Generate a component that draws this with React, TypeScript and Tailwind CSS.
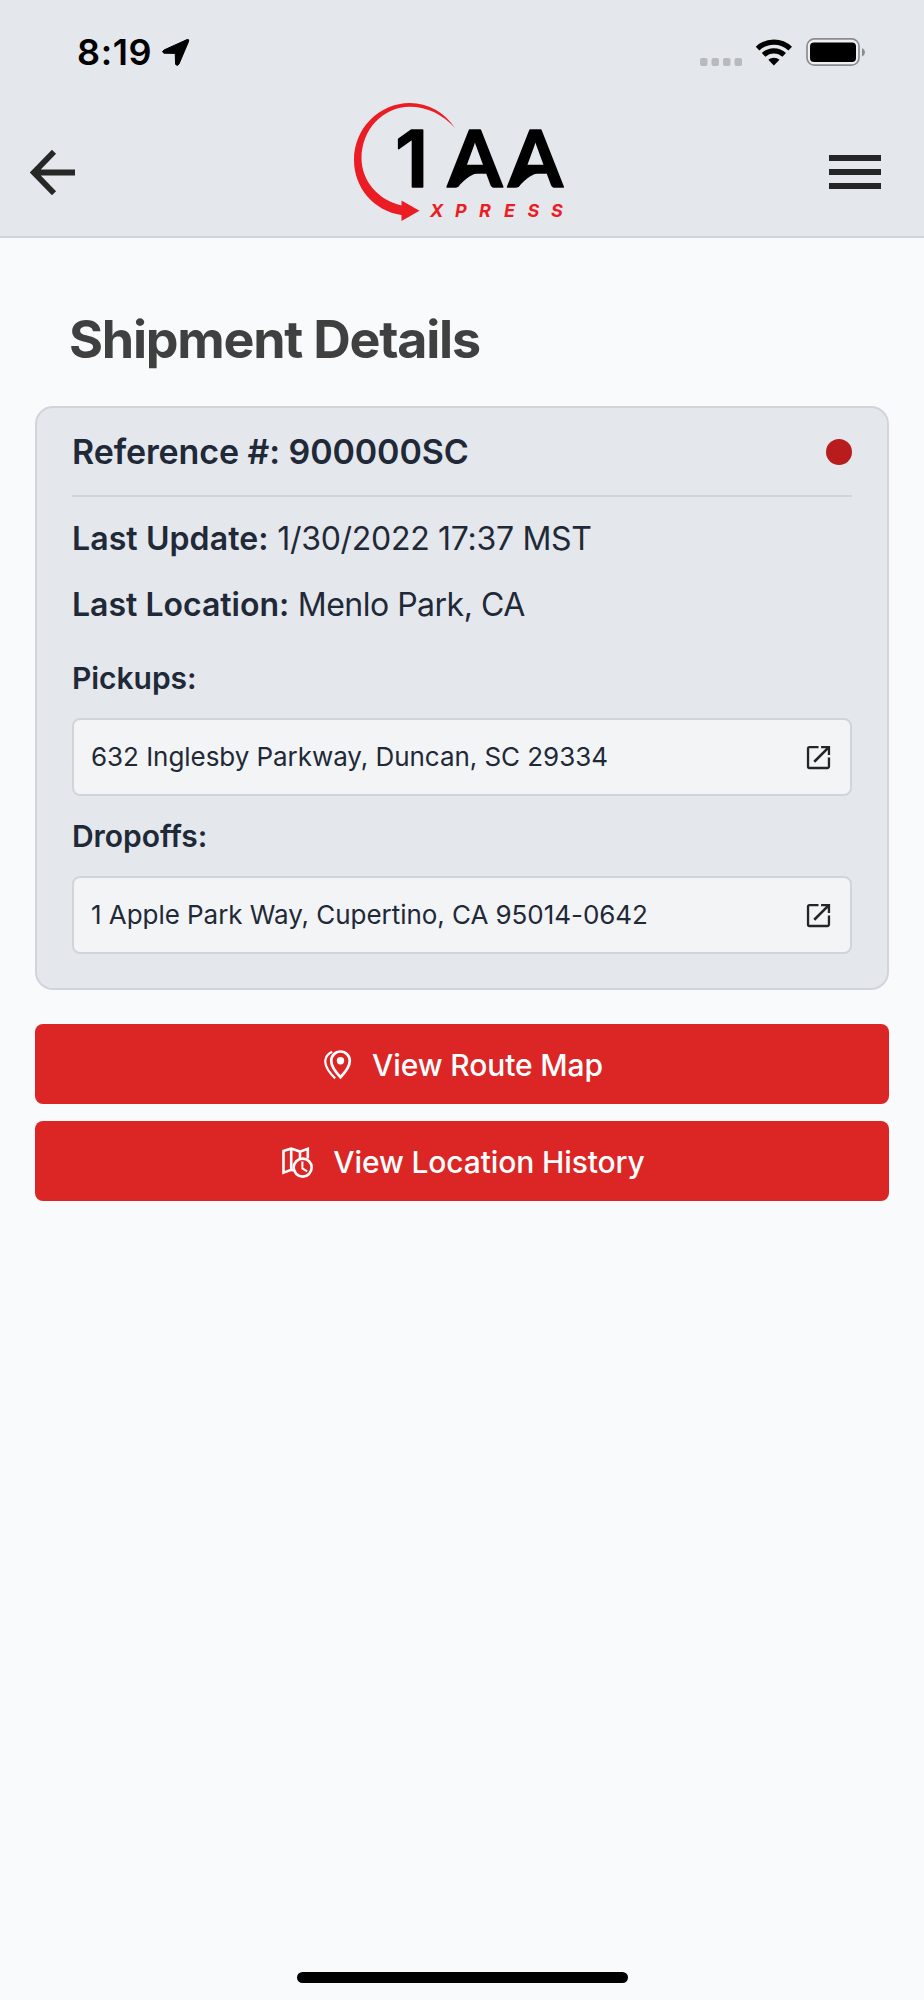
import React from 'react';

function StatusBar() {
  return (
    <div className="flex h-[108px] items-center justify-between pb-1 pl-[77px] pr-[58px] text-black">
      <div className="flex items-center">
        <span className="w-[85px] text-[36px] font-semibold leading-none tracking-[0.6px]">8:19</span>
        <svg width="28" height="28" viewBox="0 0 28 28">
          <path
            d="M2 12 L25 1.6 Q27.4 1 26.6 3.4 L17 26 Q15.6 28.6 13.6 26.4 L13.2 15.4 L2 15.2 Q-1 14 2 12Z"
            fill="currentColor"
            stroke="currentColor"
            strokeLinejoin="round"
          />
        </svg>
      </div>
      <svg width="166" height="30" viewBox="700 37 166 30">
        {[700, 711.5, 723, 734.5].map((x) => (
          <rect key={x} x={x} y="58" width="7.5" height="8" rx="2" fill="#b8babd" />
        ))}
        <g fill="none" stroke="#000" strokeWidth="5.2">
          <path d="M757.6 48.6 A23.5 23.5 0 0 1 790.2 48.6" />
          <path d="M763.6 54.9 A15 15 0 0 1 784.2 54.9" />
        </g>
        <path d="M768.3 59.8 A8.3 8.3 0 0 1 779.5 59.8 L773.9 65.6Z" fill="#000" />
        <rect x="807" y="38.8" width="52" height="26.4" rx="7.5" fill="#eeeff1" stroke="#8b8c90" strokeWidth="1.7" />
        <rect x="810" y="42.6" width="46" height="19.4" rx="4" fill="#000" />
        <path d="M862 48 Q865 49.5 865 52.2 Q865 55 862 56.5Z" fill="#8b8c90" />
      </svg>
    </div>
  );
}

function Logo() {
  return (
    <svg width="228" height="140" viewBox="338 102 228 140" className="shrink-0">
      <path
        d="M455 128 C444 112 428 103 410 103 C379 103 354 128.5 354 160 C354 188 374 211 401.5 215 V221 L419.5 210.8 L401.5 200.5 V205.5 C378 200 361.5 181 361.5 158 C361.5 129.5 383 106.7 410 106.7 C427 106.7 443 114.5 455 128Z"
        fill="#ec1c24"
      />
      <text y="187" fontSize="79" stroke="#000" strokeWidth="1.5" strokeLinejoin="round">
        <tspan x="395" className="font-['Inter',sans-serif] font-semibold">1</tspan>
        <tspan x="447.5 508" className="font-['Lato',sans-serif] font-bold">AA</tspan>
      </text>
      {/* curved accents under the crossbars */}
      <path d="M455 187 L463 170 H484 V172 C473 172 465 179 458 187Z" />
      <path d="M515.5 187 L523.5 170 H544.5 V172 C533.5 172 525.5 179 518.5 187Z" />
      <text
        x="430 455 479 504 527.5 551"
        y="217.4"
        fontSize="18"
        fill="#ec1c24"
        className="font-['Inter',sans-serif] font-bold italic"
      >
        XPRESS
      </text>
    </svg>
  );
}

function Header() {
  return (
    <header className="border-b-2 border-[#d1d5db] bg-[#e4e7eb]">
      <StatusBar />
      <nav className="flex h-[128px] items-center justify-between pl-[30px] pr-[43px]">
        <svg width="45" height="45" viewBox="0 0 45 45" fill="none" stroke="#252826" strokeWidth="5.8">
          <path d="M24 1.8 L3.8 22.5 L24 43.2 M4 22.5 H45" />
        </svg>
        <Logo />
        <div className="flex w-[52px] flex-col gap-2">
          <span className="h-1.5 bg-[#242526]" />
          <span className="h-1.5 bg-[#242526]" />
          <span className="h-1.5 bg-[#242526]" />
        </div>
      </nav>
    </header>
  );
}

function OpenIcon() {
  return (
    <svg width="31" height="31" viewBox="0 0 24 24" fill="#242526">
      <path d="M19.2 19.2H4.8V4.8H12V3H5a2 2 0 0 0-2 2v14a2 2 0 0 0 2 2h14c1.1 0 2-.9 2-2v-7h-1.8v7.2zM14 3v1.8h3.8L8 14.6 9.4 16l9.8-9.8V10H21V3h-7z" />
    </svg>
  );
}

function RouteIcon() {
  return (
    <svg width="28" height="30" viewBox="0 0 28 30" fill="none" stroke="#fff" strokeWidth="2.7">
      <path d="M16.5 27.2 Q7.2 17.5 7.2 10.8 A9.3 9.3 0 0 1 25.8 10.8 Q25.8 17.5 16.5 27.2Z" />
      <path d="M8.2 1.8 C-0.8 6 0.2 14.2 4.2 20.2 Q7 24.4 11.2 28.4" strokeWidth="2.2" />
      <circle cx="16.5" cy="10.8" r="3.7" fill="#fff" stroke="none" />
    </svg>
  );
}

function HistoryIcon() {
  return (
    <svg width="31" height="31" viewBox="0 0 31 31" fill="none" stroke="#fff" strokeWidth="2.6">
      <path d="M11 23.4 L9.2 22.8 L1.5 25.6 V4 L9.2 1.6 L18 4.6 L25.8 1.8 V11.6 M9.2 1.6 V22.8 M18 4.6 V11" />
      <circle cx="20.7" cy="20.6" r="9" />
      <path d="M20.4 14.6 V21.4 L25.2 24.4" strokeWidth="2" />
    </svg>
  );
}

interface AddressProps {
  label: string;
  address: string;
}

function Address({ label, address }: AddressProps) {
  return (
    <div className="mb-[17px]">
      <h3 className="mb-[17px] text-[30px] font-semibold leading-[46px] tracking-[-0.05px]">{label}</h3>
      <div className="flex h-[78px] items-center justify-between rounded-lg border-2 border-[#d1d5db] bg-[#f3f4f6] pl-[17px] pr-4">
        <span className="text-[26px] leading-none tracking-[-0.05px]">{address}</span>
        <OpenIcon />
      </div>
    </div>
  );
}

interface ActionButtonProps {
  icon: React.ReactNode;
  children: React.ReactNode;
}

function ActionButton({ icon, children }: ActionButtonProps) {
  return (
    <button className="flex h-[80px] w-full items-center justify-center gap-5 rounded-lg bg-[#dc2626] pl-[3px] pt-0.5 text-[30px] font-medium tracking-[-0.12px] text-white">
      {icon}
      <span>{children}</span>
    </button>
  );
}

export default function App() {
  return (
    <div className="flex h-[2000px] w-[924px] flex-col bg-[#f9fafc] font-['Inter',sans-serif] text-[#1f2937]">
      <Header />
      <main className="flex-1 px-[35px]">
        <h1 className="pl-[34px] pt-[68px] text-[52px] font-bold leading-[68px] tracking-[-1.25px] text-[#404040]">
          Shipment Details
        </h1>
        <section className="mt-8 h-[584px] rounded-[18px] border-2 border-[#d1d5db] bg-[#e4e7eb] px-[35px]">
          <div className="flex h-[89px] items-center justify-between border-b-2 border-[#d1d5db]">
            <h2 className="pt-px text-[34px] font-semibold leading-none tracking-[-0.1px]">Reference #: 900000SC</h2>
            <span className="size-[26px] rounded-full bg-[#b91c1c]" />
          </div>
          <p className="mt-[9px] text-[32px] leading-[66px] tracking-[-0.3px]">
            <b className="font-semibold tracking-[0.1px]">Last Update:</b> 1/30/2022 17:37 MST
          </p>
          <p className="mb-[17px] text-[32px] leading-[66px] tracking-[-0.5px]">
            <b className="font-semibold tracking-normal">Last Location:</b> Menlo Park, CA
          </p>
          <Address label="Pickups:" address="632 Inglesby Parkway, Duncan, SC 29334" />
          <Address label="Dropoffs:" address="1 Apple Park Way, Cupertino, CA 95014-0642" />
        </section>
        <div className="mt-[34px] flex flex-col gap-[17px]">
          <ActionButton icon={<RouteIcon />}>View Route Map</ActionButton>
          <ActionButton icon={<HistoryIcon />}>View Location History</ActionButton>
        </div>
      </main>
      <div className="mx-auto mb-[17px] h-[11px] w-[331px] rounded-full bg-black" />
    </div>
  );
}
